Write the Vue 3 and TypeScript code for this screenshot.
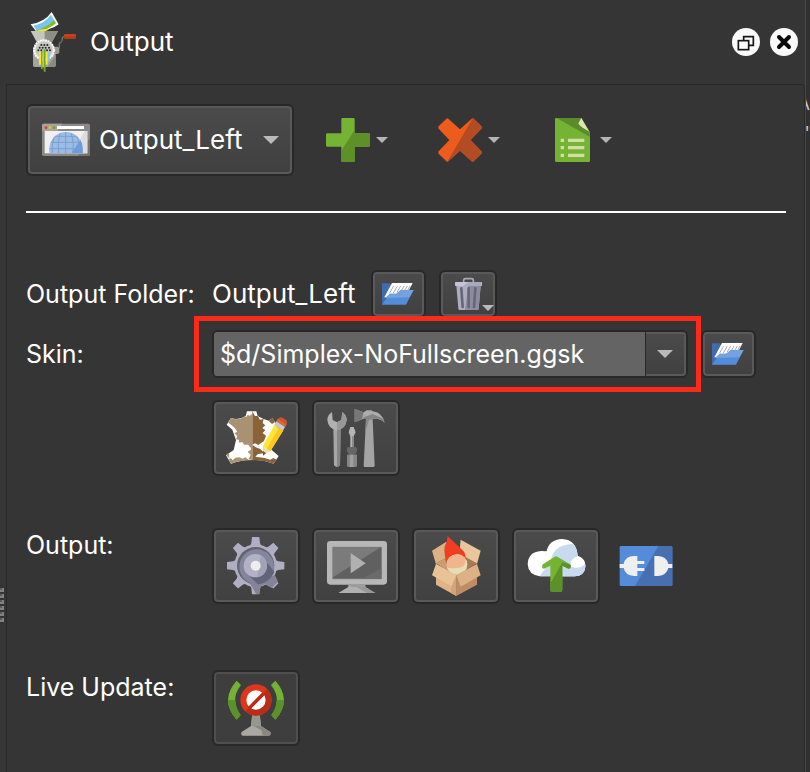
<script setup lang="ts">
import { ref } from 'vue'

interface ToolAction {
  id: 'add' | 'remove' | 'template'
  label: string
}

const outputs: string[] = ['Output_Left']
const selectedOutput = ref<string>(outputs[0])
const skin = ref<string>('$d/Simplex-NoFullscreen.ggsk')

const toolActions: ToolAction[] = [
  { id: 'add', label: 'Add output' },
  { id: 'remove', label: 'Remove output' },
  { id: 'template', label: 'Output templates' },
]
</script>

<template>
  <div class="window">
    <div class="splitter" aria-hidden="true">
      <span v-for="n in 6" :key="n" class="grip"></span>
    </div>

    <main class="dock">
      <header class="titlebar">
        <svg class="title-icon" viewBox="90 30 144 192" aria-hidden="true">
          <path d="M178 145V132Q178 128 182 128Q187 124 187 116Q187 110 193 110" fill="none" stroke="#74756d" stroke-width="4" />
          <rect x="192" y="103" width="36" height="14" rx="4" fill="#b53a1c" />
          <rect x="192" y="103" width="36" height="6" rx="3" fill="#c9441f" />
          <path d="M164 140h10l4 4v14l-4 4h-10z" fill="#9a9a90" />
          <path d="M92 73Q134 66 155 36L176 73Q155 90 108 94Z" fill="#fff" />
          <path d="M100 77Q134 70 153 44L167 68Q145 86 109 90Z" fill="#7bc4ee" />
          <path d="M109 91Q140 83 162 60L168 70Q146 90 110 94Z" fill="#84bd2c" />
          <path d="M110 94Q128 85 148 88L132 96Z" fill="#f4e62c" />
          <path d="M92 93H174L156 126H110Z" fill="#c4c5bd" />
          <path d="M134 93H174L156 126H134Z" fill="#8d8e85" />
          <path d="M99 145L116 126H148L167 145V196Q167 201 162 201H104Q99 201 99 196Z" fill="#a4a59c" />
          <path d="M142 201L167 165V196Q167 201 162 201Z" fill="#8a8b82" />
          <circle cx="132" cy="150" r="30" fill="#deded9" stroke="#fff" stroke-width="5" stroke-dasharray="6 2" />
          <circle cx="132" cy="150" r="25" fill="#c6c6c0" />
          <g fill="#272825">
            <circle cx="124" cy="135" r="3" /><circle cx="133" cy="135" r="3" /><circle cx="142" cy="135" r="3" />
            <circle cx="119" cy="143" r="3" /><circle cx="128" cy="143" r="3" /><circle cx="137" cy="143" r="3" /><circle cx="147" cy="143" r="3" />
            <circle cx="115" cy="151" r="3" /><circle cx="124" cy="151" r="3" /><circle cx="141" cy="151" r="3" /><circle cx="150" cy="151" r="3" />
          </g>
          <path d="M117 156h6v38h-6z" fill="#f6e83b" />
          <path d="M123 154h5v52q-3 4-5 0z" fill="#7fae2c" />
          <path d="M128 158h4v44h-4z" fill="#f2df2e" />
          <path d="M131 148h6v66q-3 5-6 0z" fill="#6ea52c" />
          <path d="M137 156h6v38h-6z" fill="#f2e738" />
          <path d="M143 156h6v28h-6z" fill="#83c6ed" />
        </svg>
        <h1>Output</h1>
        <div class="window-buttons">
          <button type="button" aria-label="Float panel">
            <svg viewBox="96 84 84 84" aria-hidden="true">
              <circle cx="138" cy="126" r="42" fill="#fafafa" />
              <path d="M131 121V110H160V136H147" fill="none" stroke="#161616" stroke-width="5" />
              <rect x="115" y="122" width="31" height="27" fill="#fafafa" stroke="#161616" stroke-width="5" />
            </svg>
          </button>
          <button type="button" aria-label="Close panel">
            <svg viewBox="210 84 84 84" aria-hidden="true">
              <circle cx="252" cy="126" r="42" fill="#fafafa" />
              <path d="M237 111L267 141M267 111L237 141" stroke="#0b0b0b" stroke-width="12" stroke-linecap="round" />
            </svg>
          </button>
        </div>
      </header>

      <section class="panel">
        <div class="toolbar">
          <label class="output-picker raised">
            <svg class="browser-icon" viewBox="96 99 144 102" aria-hidden="true">
              <rect x="96" y="101" width="144" height="97" rx="5" fill="#8b8984" />
              <path d="M101 101H158L143 123H96V106Q96 101 101 101Z" fill="#a5a39b" />
              <path d="M204 198L240 145V193Q240 198 235 198Z" fill="#77736e" />
              <rect x="104" y="123" width="128" height="67" fill="#f1f0f0" />
              <path d="M232 123V190H185L224 123Z" fill="#dddce0" />
              <path d="M118 190V176A50 50 0 0 1 218 176V190Z" fill="#9bbce6" />
              <path d="M185 190L211 150Q218 162 218 176V190Z" fill="#6b9bdb" />
              <path d="M167 126V190M118 176H218M123 157H211M135 139H200M150 130Q141 158 146 190M184 130Q194 158 188 190M133 140Q124 164 127 190M202 140Q211 164 208 190" fill="none" stroke="#7c9fcd" stroke-width="3" />
              <circle cx="108" cy="113" r="4" fill="#e13b25" />
              <circle cx="120" cy="113" r="4" fill="#f0c61e" />
              <circle cx="132" cy="113" r="4" fill="#64a32e" />
              <rect x="141" y="108" width="81" height="9" fill="#fff" />
            </svg>
            <select v-model="selectedOutput" aria-label="Output">
              <option v-for="name in outputs" :key="name" :value="name">{{ name }}</option>
            </select>
            <svg class="arrow-large" viewBox="0 0 16 8" aria-hidden="true"><path d="M0 0H16L8 8Z" /></svg>
          </label>

          <button v-for="action in toolActions" :key="action.id" type="button" class="tool" :aria-label="action.label">
            <svg v-if="action.id === 'add'" class="tool-icon" viewBox="48 54 132 132" aria-hidden="true">
              <path d="M94 58Q94 54 98 54H130Q134 54 134 58V100H176Q180 100 180 104V136Q180 140 176 140H134V182Q134 186 130 186H98Q94 186 94 182V140H52Q48 140 48 136V104Q48 100 52 100H94Z" fill="#74b333" />
              <path d="M134 90V100H176Q180 100 180 104V136Q180 140 176 140H134V182Q134 186 130 186H98Q94 186 94 182V152Z" fill="#5d9029" />
            </svg>
            <svg v-else-if="action.id === 'remove'" class="tool-icon" viewBox="384 54 132 132" aria-hidden="true">
              <path d="M409 56Q412 53 415 56L450 88L485 56Q488 53 491 56L514 79Q517 83 514 86L482 120L514 154Q517 157 514 161L491 184Q488 187 485 184L450 152L415 184Q412 187 409 184L386 161Q383 157 386 154L418 120L386 86Q383 83 386 79Z" fill="#ed5c1d" />
              <path d="M489 54L514 79Q517 83 514 86L482 120L514 154Q517 157 514 161L491 184Q488 187 485 184L450 152L415 184L411 186Z" fill="#b34b23" />
            </svg>
            <svg v-else class="tool-icon" viewBox="720 54 132 132" aria-hidden="true">
              <path d="M739 54H814L840 98V182Q840 186 836 186H739Q735 186 735 182V58Q735 54 739 54Z" fill="#74b333" />
              <path d="M740 54H814L838 94L840 111Z" fill="#5a8d29" />
              <path d="M814 54L838 95L816 82Q806 76 805 70Z" fill="#dce5b3" />
              <path d="M752 116h10v10h-10zm0 22h10v10h-10zm0 23h10v10h-10zM774 116h49v10h-49zm0 22h49v10h-49zm0 23h49v10h-49z" fill="#d1dfa4" />
            </svg>
            <svg class="arrow-small" viewBox="0 0 12 6" aria-hidden="true"><path d="M0 0H12L6 6Z" /></svg>
          </button>
        </div>

        <hr />

        <div class="form">
          <span class="caption middle">Output Folder:</span>
          <div class="row folder-row">
            <span class="value">Output_Left</span>
            <button type="button" class="raised small" aria-label="Open output folder">
              <svg viewBox="69 36 153 132" aria-hidden="true">
                <path d="M96 70H119L124 76V110L96 134Z" fill="#416bae" />
                <path d="M126 69H188L166 112H103Z" fill="#fff" />
                <path d="M131 78L119 99M142 78L130 99M152 78L141 97M162 78L151 97M172 78L162 95M180 78L172 93" stroke="#aaa9ad" stroke-width="3" />
                <path d="M96 134L119 101H139L152 90H191L168 134Z" fill="#538cda" />
                <path d="M105 114L119 101H139L152 90H191L178 112Z" fill="#74a2df" />
              </svg>
            </button>
            <button type="button" class="raised trash" aria-label="Clear output folder">
              <svg viewBox="273 36 162 132" aria-hidden="true">
                <path d="M341 67V61Q341 56 346 56H365Q370 56 370 61V67" fill="none" stroke="#aaa8bd" stroke-width="5" />
                <path d="M319 77H392L386 146Q386 150 382 150H329Q325 150 325 146Z" fill="#aeacbe" />
                <path d="M355 77H392L386 146Q386 150 382 150H345Z" fill="#8c8ba0" />
                <rect x="315" y="66" width="81" height="12" rx="2" fill="#c5c4d2" />
                <path d="M356 66H394V78H340Z" fill="#aaa8ba" />
                <path d="M334 85L338 141M356 85V141M376 85L372 141" stroke="#666779" stroke-width="8" stroke-linecap="round" />
                <path d="M396 135H432L414 153Z" fill="#bababa" />
              </svg>
            </button>
          </div>

          <label class="caption middle" for="skin">Skin:</label>
          <div class="row skin-row">
            <div class="combo">
              <input id="skin" v-model="skin" type="text" spellcheck="false" />
              <button type="button" aria-label="Show skins">
                <svg class="arrow-large" viewBox="0 0 16 8" aria-hidden="true"><path d="M0 0H16L8 8Z" /></svg>
              </button>
              <span class="highlight" aria-hidden="true"></span>
            </div>
            <button type="button" class="raised small" aria-label="Choose skin file">
              <svg viewBox="69 36 153 132" aria-hidden="true">
                <path d="M96 70H119L124 76V110L96 134Z" fill="#416bae" />
                <path d="M126 69H188L166 112H103Z" fill="#fff" />
                <path d="M131 78L119 99M142 78L130 99M152 78L141 97M162 78L151 97M172 78L162 95M180 78L172 93" stroke="#aaa9ad" stroke-width="3" />
                <path d="M96 134L119 101H139L152 90H191L168 134Z" fill="#538cda" />
                <path d="M105 114L119 101H139L152 90H191L178 112Z" fill="#74a2df" />
              </svg>
            </button>
          </div>

          <div class="row tiles skin-tools">
            <button type="button" class="raised tile" aria-label="Edit skin">
              <svg viewBox="42 36 252 216" aria-hidden="true">
                <path d="M141 64H169L173 78Q188 87 206 92L217 85L232 106Q218 118 208 140L208 174L236 198L221 221Q157 198 93 221L78 196L101 180L108 150L97 119L80 104L93 84Q117 92 137 78Z" fill="#fff" />
                <path d="M93 84Q113 93 133 80L139 80L144 74L150 78L153 72L157 76V164L151 173L145 164L132 164L127 156L118 158L116 149L108 148L112 138L103 130L112 125L104 114L95 106L85 98Z" fill="#a99271" />
                <path d="M157 64L165 78L173 78L180 89L191 87L188 99L196 106L187 114L196 120L188 129L198 137L192 153L175 165L165 160L157 164Z" fill="#8a6338" />
                <path d="M206 92L217 85L225 96L216 102Z" fill="#8a6338" />
                <path d="M86 207L93 205L98 211L106 203L118 202L127 206L137 202L145 209H157V211Q120 211 93 221Z" fill="#a99271" />
                <path d="M80 192L87 188L88 205L81 198Z" fill="#a99271" />
                <path d="M157 164L167 172L181 177L193 189L173 193L166 200L194 204L211 209L220 204L230 209L221 221Q190 209 157 211Z" fill="#8a6338" />
                <path d="M152 165L157 164V210L146 207L152 195L143 185L153 179Z" fill="#a99271" />
                <path d="M233 87Q239 79 248 83L258 89Q264 95 260 103L255 111L229 94Z" fill="#c95330" />
                <path d="M229 94L234 87L259 103L255 111Z" fill="#d8653d" />
                <path d="M229 94L255 111L249 122L223 106Z" fill="#c9c8cd" />
                <path d="M223 106L249 122L211 184L188 169Z" fill="#ffe538" />
                <path d="M236 114L249 122L211 184L200 178Z" fill="#ffc620" />
                <path d="M188 169L211 184L190 195Z" fill="#eee0ad" />
                <path d="M189 183L198 190L189 197Z" fill="#685438" />
              </svg>
            </button>
            <button type="button" class="raised tile" aria-label="Skin tools">
              <svg viewBox="342 36 252 216" aria-hidden="true">
                <path d="M400 112H422L420 226Q411 236 402 226Z" fill="#a6a6a6" />
                <path d="M411 112H422L420 226Q416 231 411 231Z" fill="#858585" />
                <path d="M396 66Q382 75 382 91Q385 117 411 121Q437 117 440 91Q440 75 427 66L424 90L411 97L398 90Z" fill="#b1b1b1" />
                <path d="M411 97L424 90L427 66Q440 75 440 91Q437 117 411 121Z" fill="#989898" />
                <path d="M451 111H461L467 127L461 139V173H451V139L446 127Z" fill="#b5b5b5" />
                <path d="M456 139H461V173H456Z" fill="#898989" />
                <path d="M441 174Q442 171 446 171H466Q471 171 471 176V185L467 190L471 195V226Q471 231 466 231H446Q441 231 441 226V195L446 190L441 185Z" fill="#666" />
                <path d="M441 195H471V226Q471 231 466 231H446Q441 231 441 226Z" fill="#858585" />
                <path d="M450 194H460V231H450Z" fill="#a0a0a0" />
                <path d="M498 87H518L524 227Q524 231 520 231H494Q491 231 491 227Z" fill="#a4a4a4" />
                <path d="M508 87L496 125L498 87Z" fill="#878787" />
                <path d="M464 57L491 67L500 61H514L518 64Q546 66 554 98Q540 83 518 87L507 90L494 85L464 97Z" fill="#acacac" />
                <path d="M464 57L491 67L486 87L464 97Z" fill="#777" />
                <path d="M487 83L518 72L550 86L554 98Q539 83 518 87L507 90Z" fill="#858585" />
              </svg>
            </button>
          </div>

          <span class="caption output-caption">Output:</span>
          <div class="row tiles output-tools">
            <button type="button" class="raised tile" aria-label="Generate output">
              <svg viewBox="42 45 252 216" aria-hidden="true">
                <g fill="#b0aec3">
                  <path v-for="angle in 8" :key="angle" d="M147 100L154 84L156 66H178L180 84L187 100Z" :transform="`rotate(${angle * 45} 167 152)`" />
                  <circle cx="167" cy="152" r="64" />
                </g>
                <path d="M225 180L234 200L215 219L194 208L183 213L176 237H169L151 207Z" fill="#858397" />
                <circle cx="167" cy="152" r="56" fill="#626474" />
                <circle cx="170" cy="155" r="52" fill="#85869b" />
                <path d="M202 144L223 171Q205 209 165 208L140 175Z" fill="#626579" />
                <path d="M142 177L168 237H176L177 211Z" fill="#858397" />
                <circle cx="166" cy="152" r="35" fill="#b3b1c6" />
                <path d="M183 121Q200 132 201 152Q199 181 172 187Z" fill="#a3a2b6" />
                <circle cx="167" cy="152" r="15" fill="#efeeee" />
              </svg>
            </button>
            <button type="button" class="raised tile" aria-label="Preview output">
              <svg viewBox="342 45 252 216" aria-hidden="true">
                <rect x="381" y="78" width="180" height="131" rx="10" fill="#b7b7b7" />
                <rect x="396" y="95" width="150" height="98" rx="3" fill="#8e8e8e" />
                <rect x="399" y="97" width="145" height="94" fill="#606060" />
                <path d="M399 97H542L399 187Z" fill="#7b7b7b" />
                <path d="M488 191L544 160V191Z" fill="#6b6b6b" />
                <path d="M452 114V175L497 145Z" fill="#b1b1b1" />
                <path d="M445 209H496V216L526 234H415L445 216Z" fill="#b1b1b1" />
                <path d="M445 209H496V216H454Z" fill="#9d9d9d" />
                <path d="M470 216H496L526 234H501Z" fill="#989898" />
              </svg>
            </button>
            <button type="button" class="raised tile" aria-label="Create package">
              <svg viewBox="42 45 252 216" aria-hidden="true">
                <path d="M96 107L139 80L149 126L108 148Z" fill="#dcb184" />
                <path d="M182 74L242 107L231 147L178 118Z" fill="#eac69b" />
                <path d="M108 145L169 112L231 145L169 182Z" fill="#a87955" />
                <path d="M108 145L134 132L143 154L169 182Z" fill="#cb9d72" />
                <path d="M143 63L184 102Q202 115 194 145Q180 158 145 151Q130 123 134 94Q142 82 143 63Z" fill="#f13e21" />
                <circle cx="171" cy="149" r="31" fill="#e4deb7" />
                <path d="M140 149A31 31 0 0 1 196 131Q198 148 187 155Q167 163 142 158Z" fill="#efb58c" />
                <path d="M108 147L169 181V243L108 209Z" fill="#dfb388" />
                <path d="M231 147L169 181V243L231 209Z" fill="#bd8d65" />
                <path d="M108 147L169 181L155 214L96 181Z" fill="#e8c397" />
                <path d="M231 147L169 181L182 215L242 181Z" fill="#ddb184" />
                <path d="M155 214L169 181V243L153 234Z" fill="#d4a377" />
              </svg>
            </button>
            <button type="button" class="raised tile" aria-label="Upload output">
              <svg viewBox="342 45 252 216" aria-hidden="true">
                <path d="M420 184Q385 180 383 148Q384 111 423 108L440 109Q447 73 487 72Q529 74 533 122Q555 129 557 153Q553 184 524 184Z" fill="#fff" />
                <path d="M420 184Q428 164 452 151Q450 91 518 86Q532 99 533 123L522 130L512 151L481 184Z" fill="#c7daef" />
                <path d="M480 184V164Q508 174 516 156Q537 163 555 148Q557 180 524 184Z" fill="#c7daef" />
                <path d="M513 139Q524 122 540 127Q555 134 555 155Q542 163 526 160L512 151Z" fill="#fff" />
                <path d="M516 156Q538 164 554 147Q560 182 524 184H480V164Q502 166 516 156Z" fill="#c7daef" />
                <path d="M464 125Q468 122 472 125L510 148Q515 153 511 159Q507 163 502 160L487 152V225Q487 231 481 231H456Q451 231 451 225V152L436 160Q430 163 427 158Q424 152 429 148Z" fill="#75b432" />
                <path d="M487 142L511 149Q515 154 511 159Q507 163 502 160L487 152V225Q487 231 481 231H456Q451 231 451 225V206Z" fill="#5b9128" />
              </svg>
            </button>
            <button type="button" class="plug" aria-label="Output plug-in">
              <svg viewBox="657 90 162 126" aria-hidden="true">
                <rect x="659" y="93" width="158" height="120" rx="4" fill="#558cd9" />
                <path d="M775 93H813Q817 93 817 97V209Q817 213 813 213H705Z" fill="#4670b1" />
                <path d="M659 147H671Q676 123 702 123H712V138H733V147H712V159H733V168H712V183H702Q676 182 671 159H659Z" fill="#efeff0" />
                <path d="M763 123H775Q800 125 805 147H817V159H805Q800 180 775 183H763Z" fill="#efeff0" />
              </svg>
            </button>
          </div>

          <span class="caption live-caption">Live Update:</span>
          <div class="row tiles live-tools">
            <button type="button" class="raised tile flat" aria-label="Toggle live update">
              <svg viewBox="42 36 252 216" aria-hidden="true">
                <path d="M110 62L123 75Q88 120 122 165L110 179Q58 120 110 62Z" fill="#73b233" />
                <path d="M84 120H106Q107 146 122 165L110 179Q84 151 84 120Z" fill="#5b912a" />
                <path d="M226 62L213 75Q248 120 214 165L226 179Q278 120 226 62Z" fill="#73b233" />
                <path d="M252 120H230Q229 146 214 165L226 179Q252 151 252 120Z" fill="#5b912a" />
                <path d="M157 162H179L183 198L211 216Q215 227 205 227H129Q121 226 125 216L153 198Z" fill="#aaa9a1" />
                <path d="M157 162H179L183 198H153Z" fill="#96978e" />
                <path d="M161 198H183L211 216Q215 227 205 227H188L184 211Z" fill="#888880" />
                <circle cx="168" cy="120" r="47" fill="#df351b" />
                <path d="M201 87Q215 101 215 120Q213 163 168 167Q149 166 136 154Z" fill="#b72d18" />
                <circle cx="168" cy="120" r="29" fill="#fff" />
                <path d="M142 143L188 96L195 104L150 149Z" fill="#bd2b17" />
              </svg>
            </button>
          </div>
        </div>
      </section>
    </main>

    <aside class="neighbour" aria-hidden="true">
      <span>A</span>
      <span>s'</span>
    </aside>
  </div>
</template>

<style>
body {
  background: #353535;
}
</style>

<style scoped>
.window {
  display: grid;
  grid-template-columns: 6px minmax(0, 1fr) 5px;
  min-height: 100vh;
  overflow: hidden;
  color: #fff;
  background: #353535;
  font: 400 25px/34px Inter, "Liberation Sans", sans-serif;
}

button,
input,
select {
  margin: 0;
  padding: 0;
  border: 0;
  color: inherit;
  background: none;
  font: inherit;
}

button {
  cursor: pointer;
}

svg {
  display: block;
}

.splitter {
  display: flex;
  flex-direction: column;
  gap: 2px;
  padding-top: 588px;
}

.grip {
  width: 4px;
  height: 4px;
  background: linear-gradient(#5c5c5c, #5c5c5c) 0 0 / 2px 2px no-repeat #818181;
}

.dock {
  display: flex;
  flex-direction: column;
}

.titlebar {
  display: flex;
  align-items: center;
  height: 84px;
  padding: 0 7px 0 24px;
}

.title-icon {
  width: 48px;
  height: 64px;
}

h1,
select,
.value {
  font-size: 26px;
  font-weight: 400;
  line-height: 36px;
}

h1 {
  flex: 1;
  margin: 0 0 0 12px;
}

.window-buttons {
  display: flex;
  gap: 10px;
}

.window-buttons svg {
  width: 28px;
  height: 28px;
}

.panel {
  flex: 1;
  padding: 19px 18px 26px 19px;
  border: 1px solid #292929;
  border-bottom: 0;
  border-radius: 0 4px 0 0;
}

.raised {
  box-sizing: border-box;
  border: 2px solid #282828;
  border-radius: 6px;
  background: linear-gradient(#4b4b4b, #404040);
  box-shadow: inset 0 0 0 2px #595959;
}

.toolbar {
  display: flex;
  align-items: center;
  gap: 50px;
}

.output-picker {
  display: flex;
  align-items: center;
  width: 268px;
  height: 72px;
  margin-right: -18px;
  padding: 0 13px 0 14px;
}

.browser-icon {
  width: 48px;
  height: 34px;
}

select {
  flex: 1;
  min-width: 0;
  margin-left: 9px;
  appearance: none;
}

option {
  color: #fff;
  background: #404040;
}

.arrow-large {
  width: 16px;
  height: 8px;
  fill: #bababa;
}

.arrow-small {
  width: 12px;
  height: 6px;
  fill: #b5b5b5;
}

.tool {
  display: flex;
  align-items: center;
  gap: 6px;
}

.tool-icon {
  width: 44px;
  height: 44px;
}

hr {
  height: 2px;
  margin: 35px 0 57px;
  border: 0;
  background: #fff;
}

.form {
  display: grid;
  grid-template-columns: 186px minmax(0, 1fr);
}

.caption {
  grid-column: 1;
  white-space: nowrap;
}

.middle {
  align-self: center;
}

.row {
  display: flex;
  grid-column: 2;
}

.folder-row {
  align-items: center;
  gap: 13px;
  margin-bottom: 12px;
}

.value {
  min-width: 146px;
}

.form > .middle:first-child {
  margin-bottom: 12px;
}

.small {
  width: 55px;
  height: 48px;
}

.trash {
  width: 58px;
  height: 48px;
}

.skin-row {
  gap: 13px;
  padding-right: 30px;
}

.combo {
  position: relative;
  display: flex;
  flex: 1;
  box-sizing: border-box;
  height: 48px;
  border: 2px solid #282828;
  border-radius: 6px;
}

.combo input {
  flex: 1;
  min-width: 0;
  padding: 0 6px;
  border-radius: 3px 0 0 3px;
  outline: 0;
  background: #646464;
}

.combo button {
  display: flex;
  align-items: center;
  justify-content: center;
  width: 41px;
  padding-right: 2px;
  box-sizing: border-box;
  border-left: 1px solid #282828;
  border-radius: 0 4px 4px 0;
  background: linear-gradient(#4b4b4b, #404040);
  box-shadow: inset -2px 0 #595959, inset 0 2px #595959, inset 0 -2px #595959;
}

.highlight {
  position: absolute;
  inset: -16px -15px -16px -20px;
  border: 5px solid #fb2b1b;
  pointer-events: none;
}

.tiles {
  gap: 12px;
}

.tile {
  width: 88px;
  height: 76px;
}

.flat {
  background: #3e3e3e;
  box-shadow: inset 0 0 0 2px #4f4f4f;
}

.skin-tools {
  margin-top: 22px;
}

.output-caption,
.output-tools {
  margin-top: 52px;
}

.live-caption,
.live-tools {
  margin-top: 66px;
}

.plug {
  margin-left: 7px;
}

.plug svg {
  width: 54px;
  height: 42px;
}

.neighbour {
  display: flex;
  flex-direction: column;
  align-items: flex-end;
  gap: 4px;
  overflow: hidden;
  padding-top: 91px;
  border-left: 1px solid #484848;
  background: #303030;
  color: #c8c8c8;
  font-size: 18px;
  line-height: 26px;
}
</style>
